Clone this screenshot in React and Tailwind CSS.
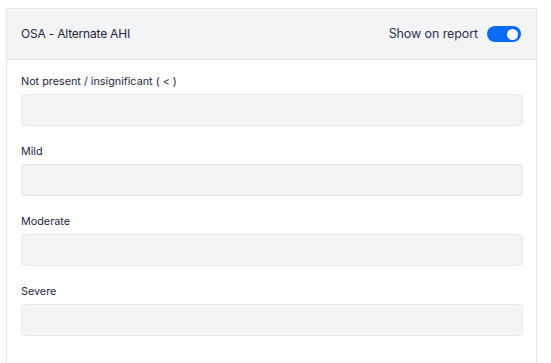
export default function App() {
  const fields = ['Not present / insignificant ( < )', 'Mild', 'Moderate', 'Severe'];
  return (
    <div className="h-screen overflow-hidden bg-white pt-[8px] pl-[6px]" style={{ fontFamily: 'Inter, "Noto Sans", sans-serif' }}>
      <div className="w-[531px] h-[400px] border border-[#e4e6eb] bg-white">
        <div className="flex h-[51px] items-center justify-between border-b border-[#e4e6eb] bg-[#f3f4f6] pl-[14px] pr-[15px]">
          <span className="text-[12px] tracking-[-0.2px] text-[#1c2640]">OSA - Alternate AHI</span>
          <div className="flex items-center gap-[9px]">
            <span className="text-[12.5px] tracking-[-0.1px] text-[#2a3550]">Show on report</span>
            <div className="flex h-[16px] w-[34px] items-center justify-end rounded-full bg-[#0b6bf5] pr-[3px]">
              <div className="h-[11px] w-[11px] rounded-full bg-white" />
            </div>
          </div>
        </div>
        <div className="flex flex-col gap-[18px] px-[14px] pt-[14px]">
          {fields.map((f) => (
            <div key={f} className="flex flex-col gap-[4px]">
              <label className="h-[16px] text-[10.8px] leading-[16px] text-[#1c2640]">{f}</label>
              <div className="h-[32px] w-[502px] rounded-[4px] border border-[#e4e6eb] bg-[#f3f4f6]" />
            </div>
          ))}
        </div>
      </div>
    </div>
  );
}
